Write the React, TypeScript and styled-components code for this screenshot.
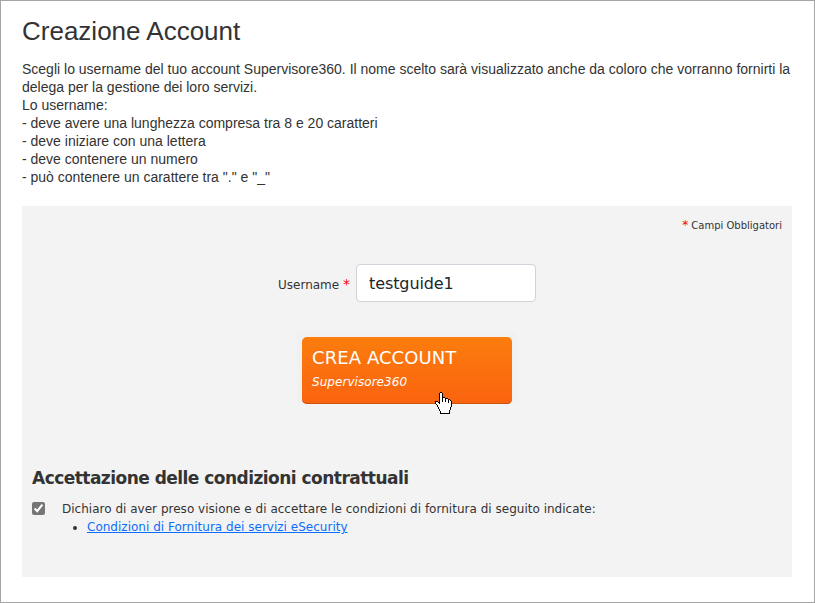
import React from 'react';
import styled, { createGlobalStyle } from 'styled-components';

const GlobalStyle = createGlobalStyle`
  * { box-sizing: border-box; }
  body { margin: 0; background: #fff; }
`;
const Page = styled.main`
  width: 815px;
  height: 603px;
  border: 1px solid #a5a5a5;
  padding: 14px 22px 0 21px;
  font-family: "Liberation Sans", Arial, sans-serif;
  color: #333;
  background: #fff;
`;
const Title = styled.h1`
  margin: 0;
  font-size: 26px;
  line-height: 32px;
  font-weight: 400;
`;
const Intro = styled.div`
  margin-top: 13px;
  font-size: 14px;
  line-height: 18px;
  white-space: nowrap;
`;
const Panel = styled.section`
  margin-top: 20px;
  height: 371px;
  background: #f3f3f3;
  padding: 13px 10px 0;
  font-family: "DejaVu Sans", Verdana, sans-serif;
  display: flex;
  flex-direction: column;
`;
const Star = styled.span<{ $size: number }>`
  color: #f00;
  font-size: ${(p) => p.$size}px;
  line-height: 1;
`;
const Required = styled.div`
  align-self: flex-end;
  height: 14px;
  font-size: 10px;
  line-height: 14px;
`;
const Field = styled.label`
  margin: 31px 0 0 246px;
  display: flex;
  align-items: center;
  font-size: 12px;
`;
const LabelText = styled.span`
  width: 78px;
  padding-top: 2px;
  white-space: nowrap;
`;
const Input = styled.input`
  width: 180px;
  height: 38px;
  border: 1px solid #ced4da;
  border-radius: 4px;
  padding: 0 12px;
  font: 16px "DejaVu Sans", Verdana, sans-serif;
  letter-spacing: -0.1px;
  color: #212529;
  background: #fff;
`;
const ButtonFrame = styled.div`
  margin: 30px 0 0 265px;
  width: 220px;
  height: 70px;
  padding: 5px;
  background: #f1f1f1;
`;
const Button = styled.button`
  position: relative;
  width: 210px;
  height: 67px;
  border: 0;
  border-radius: 5px;
  padding: 9px 10px 0;
  display: flex;
  flex-direction: column;
  text-align: left;
  color: #fff;
  font-family: "DejaVu Sans", Verdana, sans-serif;
  background: linear-gradient(#fb7d0d, #fb630f);
  box-shadow: inset 0 -1px 0 #c8540f;
`;
const ButtonTitle = styled.span`
  font-size: 18px;
  line-height: 24px;
  letter-spacing: 0.08px;
  white-space: nowrap;
`;
const ButtonSub = styled.span`
  font-size: 12px;
  line-height: 16px;
  margin-top: 4px;
  letter-spacing: 0.05px;
  font-style: italic;
`;
const Cursor = styled.svg`
  position: absolute;
  left: 133px;
  top: 55px;
`;
const Heading = styled.h2`
  margin: 64px 0 0;
  font-size: 17px;
  line-height: 24px;
  letter-spacing: -0.53px;
`;
const Terms = styled.div`
  display: flex;
  margin-top: 10px;
  font-size: 12px;
  line-height: 18px;
  letter-spacing: 0.015px;
`;
const Check = styled.input`
  width: 13px;
  height: 13px;
  margin: 2px 17px 0 0;
  accent-color: #767676;
`;
const List = styled.ul`
  margin: 0;
  padding-left: 25px;
`;
const Link = styled.a`
  color: #0d6efd;
  text-decoration: underline;
`;

export default function App() {
  return (
    <Page>
      <GlobalStyle />
      <Title>Creazione Account</Title>
      <Intro>
        Scegli lo username del tuo account Supervisore360. Il nome scelto sarà visualizzato anche da coloro che vorranno fornirti la<br />
        delega per la gestione dei loro servizi.<br />
        Lo username:<br />
        - deve avere una lunghezza compresa tra 8 e 20 caratteri<br />
        - deve iniziare con una lettera<br />
        - deve contenere un numero<br />
        - può contenere un carattere tra "." e "_"
      </Intro>
      <Panel>
        <Required><Star $size={12}>*</Star> Campi Obbligatori</Required>
        <Field>
          <LabelText>Username <Star $size={14}>*</Star></LabelText>
          <Input defaultValue="testguide1" />
        </Field>
        <ButtonFrame>
          <Button>
            <ButtonTitle>CREA ACCOUNT</ButtonTitle>
            <ButtonSub>Supervisore360</ButtonSub>
            <Cursor width="17" height="22" viewBox="0 0 17 22" shapeRendering="crispEdges">
              <path
                fill="#000"
                d="M5 0h2v1h1v4h2v1h3v1h2v1h1v1h1v6h-1v3h-1v4H5v-3H4v-2H3v-2H2v-2H1v-1H0v-3h3v1h1V1h1z"
              />
              <path
                fill="#fff"
                d="M5 1h2v9h1V6h2v4h1V7h2v4h1V8h1v1h1v6h-1v3h-1v3H6v-2H5v-2H4v-2H3v-2H2v-1H1v-2h2v1h1v1h1z"
              />
            </Cursor>
          </Button>
        </ButtonFrame>
        <Heading>Accettazione delle condizioni contrattuali</Heading>
        <Terms>
          <Check type="checkbox" defaultChecked />
          <div>
            Dichiaro di aver preso visione e di accettare le condizioni di fornitura di seguito indicate:
            <List><li><Link href="#">Condizioni di Fornitura dei servizi eSecurity</Link></li></List>
          </div>
        </Terms>
      </Panel>
    </Page>
  );
}
